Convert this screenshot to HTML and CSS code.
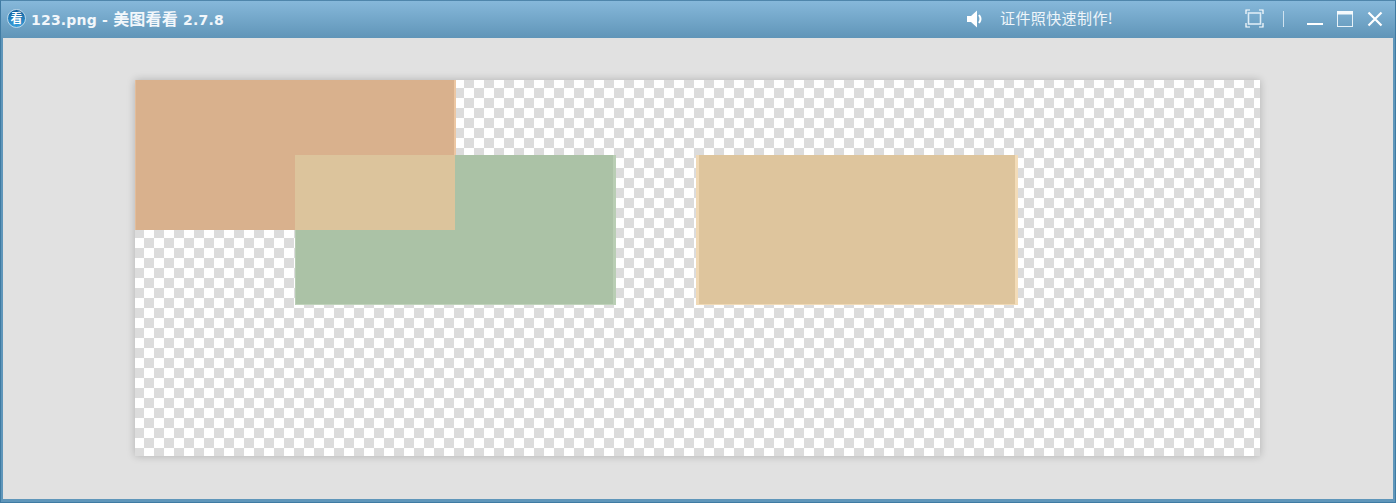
FILE: index.html
```html
<!DOCTYPE html>
<html lang="zh-CN">
<head>
    <meta charset="UTF-8">
    <title>123.png - 美图看看 2.7.8</title>
    <link rel="stylesheet" href="styles.css">
</head>
<body>
    <div class="window">
        <div class="titlebar">
            <div class="title-left">
                <svg class="app-logo" width="19" height="19" viewBox="0 0 19 19">
                    <defs>
                        <linearGradient id="logoFill" x1="0" y1="0" x2="0" y2="1">
                            <stop offset="0" stop-color="#0f5f9c"/>
                            <stop offset="1" stop-color="#3aa0dc"/>
                        </linearGradient>
                    </defs>
                    <circle cx="9.5" cy="9.5" r="9" fill="url(#logoFill)" stroke="#d5e8f4" stroke-width="0.8"/>
                    <text class="logo-char" x="9.5" y="14" text-anchor="middle">看</text>
                </svg>
                <span class="app-title">123.png - <span class="title-cjk">美图看看</span> 2.7.8</span>
            </div>
            <div class="promo">
                <svg width="18" height="20" viewBox="0 0 18 20">
                    <path d="M1 7 H5 L11 1.5 V18.5 L5 13 H1 Z" fill="#fff"/>
                    <path d="M13 6 Q16 10 13 14" fill="none" stroke="#fff" stroke-width="2"/>
                </svg>
                <span class="promo-text">证件照快速制作!</span>
            </div>
            <div class="win-controls">
                <svg class="btn-full" width="19" height="19" viewBox="0 0 19 19">
                    <path d="M1 5 V1 H5 M14 1 H18 V5 M18 14 V18 H14 M5 18 H1 V14" fill="none" stroke="#fff" stroke-width="1.2"/>
                    <rect x="3.5" y="4" width="12" height="11" fill="none" stroke="#dcecf6" stroke-width="1.6"/>
                </svg>
                <span class="divider"></span>
                <svg class="btn-min" width="16" height="18" viewBox="0 0 16 18">
                    <rect x="0" y="13" width="16" height="2" fill="#fff"/>
                </svg>
                <svg class="btn-max" width="16" height="16" viewBox="0 0 16 16">
                    <rect x="0.5" y="0.5" width="15" height="15" fill="none" stroke="#e6f1f8"/>
                    <rect x="0" y="0" width="16" height="3.5" fill="#f4f9fc"/>
                </svg>
                <svg class="btn-close" width="16" height="16" viewBox="0 0 16 16">
                    <path d="M1.5 1.5 L14.5 14.5 M14.5 1.5 L1.5 14.5" stroke="#fff" stroke-width="2.2"/>
                </svg>
            </div>
        </div>
        <div class="viewer">
            <div class="canvas">
                <div class="shape shape-orange"></div>
                <div class="shape shape-green"></div>
                <div class="shape shape-overlap"></div>
                <div class="shape shape-tan"></div>
            </div>
        </div>
    </div>
</body>
</html>
```

FILE: styles.css
```css
html, body {
    margin: 0;
    padding: 0;
}

body {
    width: 1396px;
    height: 503px;
    overflow: hidden;
    font-family: "DejaVu Sans", "Noto Sans CJK SC", sans-serif;
}

.window {
    box-sizing: border-box;
    width: 1396px;
    height: 503px;
    display: flex;
    flex-direction: column;
    background: #5f96ba;
    border: 1px solid #3f7ba3;
    border-top-color: #4f86ab;
    padding: 0 2px 3px 2px;
}

.titlebar {
    box-sizing: border-box;
    flex: none;
    height: 37px;
    display: flex;
    align-items: center;
    margin: 0 -2px;
    padding: 0 9px 2px 6px;
    background: linear-gradient(#86b8da, #6095b8);
    color: #fff;
}

.title-left {
    display: flex;
    align-items: center;
    gap: 5px;
    width: 952px;
}

.logo-char {
    font-family: "Noto Sans CJK SC", sans-serif;
    font-size: 12px;
    font-weight: bold;
    fill: #fff;
}

.app-title {
    font-size: 14px;
    font-weight: bold;
    letter-spacing: 0.2px;
    color: #f2f7fb;
    white-space: nowrap;
    margin-bottom: 2px;
}

.title-cjk {
    font-family: "Noto Sans CJK SC", sans-serif;
    font-size: 16px;
}

.promo {
    display: flex;
    align-items: center;
    gap: 16px;
    width: 279px;
    margin-left: 7px;
}

.promo-text {
    font-family: "Noto Sans CJK SC", sans-serif;
    font-size: 15px;
    letter-spacing: 0.4px;
    color: #eef5fa;
    white-space: nowrap;
    margin-bottom: 2px;
}

.win-controls {
    display: flex;
    align-items: center;
}

.btn-full {
    margin-right: 19px;
}

.divider {
    width: 1px;
    height: 16px;
    background: #cfe2ef;
    margin-right: 23px;
}

.btn-min {
    margin-right: 14px;
}

.btn-max {
    margin-right: 14px;
}

.viewer {
    flex: 1;
    background: #e1e1e1;
    padding: 42px 133px 0 132px;
}

.canvas {
    position: relative;
    width: 1125px;
    height: 376px;
    background-color: #fff;
    background-image: conic-gradient(#dcdcdc 25%, #fff 25% 50%, #dcdcdc 50% 75%, #fff 75%);
    background-size: 20px 20px;
    background-position: -1px -2px;
    box-shadow: 0 0 8px rgba(0, 0, 0, 0.22);
}

/* shapes sit where the picture being viewed has them */
.shape {
    position: absolute;
    box-sizing: border-box;
    width: 321px;
    height: 150px;
}

.shape-orange {
    left: 0;
    top: 0;
    background: #d9b18d;
    border-left: 1px solid #e2bd9b;
    border-right: 2px solid #ecc7a3;
}

.shape-green {
    left: 160px;
    top: 75px;
    background: #abc2a6;
    border-left: 1px solid #b8ccb4;
    border-right: 3px solid #b9ceb4;
    border-bottom: 1px solid #bfd2ba;
}

.shape-overlap {
    left: 160px;
    top: 75px;
    width: 160px;
    height: 75px;
    background: #dcc49c;
}

.shape-tan {
    left: 561px;
    top: 75px;
    width: 322px;
    background: #dec59d;
    border-left: 3px solid #f0d9b6;
    border-right: 3px solid #f3dcb8;
    border-bottom: 1px solid #efd9b6;
}
```
